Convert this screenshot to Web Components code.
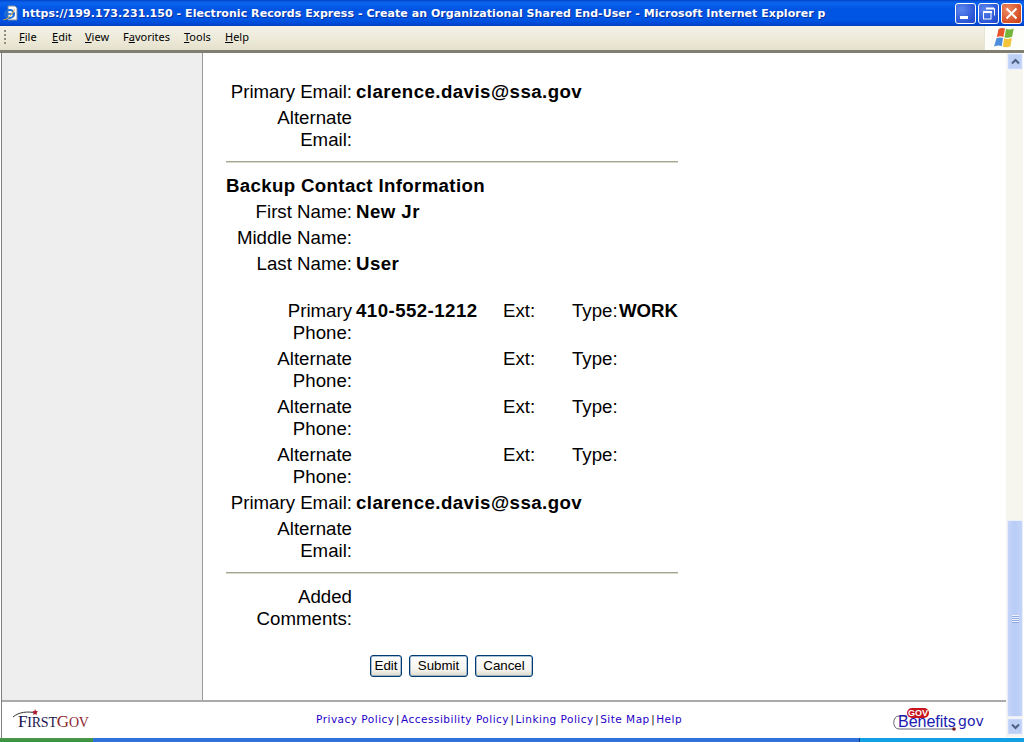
<!DOCTYPE html>
<html lang="en"><head><meta charset="utf-8"><title>Electronic Records Express</title>
<style>
html,body{margin:0;padding:0;height:100%;overflow:hidden;background:#fff}
</style></head><body>
<xp-window>
  <xp-titlebar slot="title">https://199.173.231.150 - Electronic Records Express - Create an Organizational Shared End-User - Microsoft Internet Explorer p</xp-titlebar>
  <xp-menubar slot="menu"></xp-menubar>
  <side-panel slot="side"></side-panel>
  <record-form slot="content">
    <form-row label="Primary Email:" value="clarence.davis@ssa.gov"></form-row>
    <form-row label="Alternate Email:"></form-row>
    <form-rule></form-rule>
    <form-heading>Backup Contact Information</form-heading>
    <form-row label="First Name:" value="New Jr"></form-row>
    <form-row label="Middle Name:"></form-row>
    <form-row label="Last Name:" value="User"></form-row>
    <phone-row style="margin-top:25px" label="Primary Phone:" value="410-552-1212" type="WORK"></phone-row>
    <phone-row label="Alternate Phone:"></phone-row>
    <phone-row label="Alternate Phone:"></phone-row>
    <phone-row label="Alternate Phone:"></phone-row>
    <form-row label="Primary Email:" value="clarence.davis@ssa.gov"></form-row>
    <form-row label="Alternate Email:"></form-row>
    <form-rule></form-rule>
    <form-row label="Added Comments:"></form-row>
    <button-row>
      <xp-button style="width:32px">Edit</xp-button>
      <xp-button style="width:59px">Submit</xp-button>
      <xp-button style="width:58px">Cancel</xp-button>
    </button-row>
  </record-form>
  <site-footer slot="footer"></site-footer>
  <xp-scrollbar slot="scroll"></xp-scrollbar>
</xp-window>
<script>
function def(name, css, html, init){
  customElements.define(name, class extends HTMLElement{
    connectedCallback(){
      if(this.shadowRoot) return;
      const r=this.attachShadow({mode:'open'});
      r.innerHTML='<style>'+css+'</style>'+(typeof html==='function'?html(this):html);
      if(init) init(this,r);
    }
  });
}
def('xp-window',`
:host{display:flex;flex-direction:column;width:1024px;height:742px;overflow:hidden;font-family:"Liberation Sans",Arial,sans-serif}
.body{display:flex;flex:1;min-height:0;background:#fff;padding-left:1px}
.frame{width:1px;background:#808080}
.left{flex:1;display:flex;flex-direction:column;min-width:0}
.main{display:flex;height:647px}
.task{height:4px;display:flex;flex:none}
.task i{display:block}
.g{width:93px;background:linear-gradient(#4c9a4c,#3a8f3e)}
.b{width:766px;background:#2f71d8;border-right:1px solid #123a88}
.c{flex:1;background:#12a0e4}
`,`
<slot name="title"></slot><slot name="menu"></slot>
<div class="body"><div class="frame"></div>
 <div class="left"><div class="main"><slot name="side"></slot><slot name="content"></slot></div><slot name="footer"></slot></div>
 <slot name="scroll"></slot></div>
<div class="task"><i class="g"></i><i class="b"></i><i class="c"></i></div>`);
def('xp-titlebar',`
:host{display:flex;align-items:center;flex:none;height:26px;box-sizing:border-box;padding:0 2px 0 3px;gap:3px;
background:linear-gradient(#0042c8 0,#0a5fe8 2px,#0a62ec 4px,#0054e3 9px,#0054e3 20px,#0048d4 24px,#003cba 26px);color:#fff}
.t{flex:1;font:bold 11px/26px "DejaVu Sans",Verdana,sans-serif;white-space:nowrap;overflow:hidden;text-shadow:1px 1px 0 #0a2e9c;letter-spacing:.05px;padding-top:1px;height:25px}
.btns{display:flex;gap:2px}
.b{width:21px;height:21px;box-sizing:border-box;border:1px solid #fff;border-radius:3px;background:radial-gradient(circle at 30% 30%,#5d86ee,#2a55d5 70%,#1f46c4);display:block}
.x{background:radial-gradient(circle at 30% 30%,#ec8a63,#d9532a 65%,#c23c14)}
svg{display:block}
`,`
<svg width="16" height="16" viewBox="0 0 16 16"><path d="M5 1h7l2 2v12H5z" fill="#fdfdfd" stroke="#7f88a0"/><path d="M7 5h5M9 8h3M9 11h3" stroke="#c4cbe0"/>
<ellipse cx="6.500" cy="9" rx="4.500" ry="4" fill="none" stroke="#1e6fd6" stroke-width="2"/><path d="M2 9h9" stroke="#1e6fd6" stroke-width="1.600"/><path d="M.500 14.500c2 1 8-3 11-10" fill="none" stroke="#f0b030" stroke-width="1"/></svg>
<div class="t"><slot></slot></div>
<div class="btns">
<span class="b"><svg width="19" height="19" viewBox="0 0 19 19"><rect x="4" y="12" width="8" height="3" fill="#fff"/></svg></span>
<span class="b"><svg width="19" height="19" viewBox="0 0 19 19"><path d="M7.500 4.500h8v7" fill="none" stroke="#fff"/><rect x="7" y="3.500" width="8" height="2" fill="#fff"/><rect x="4.500" y="8.500" width="7.500" height="6.500" fill="none" stroke="#fff"/><rect x="4" y="7" width="9" height="2" fill="#fff"/></svg></span>
<span class="b x"><svg width="19" height="19" viewBox="0 0 19 19"><path d="M4.500 4.500l10 10M14.500 4.500l-10 10" stroke="#fff" stroke-width="2"/></svg></span>
</div>`);
def('xp-menubar',`
:host{display:flex;flex:none;height:27px;box-sizing:border-box;background:#ece9d8;border-bottom:3px solid;border-image:linear-gradient(#a9a695 0,#7f7d70 100%) 1;font:11px "Noto Sans",Tahoma,sans-serif;color:#000}
.bar{flex:1;display:flex;align-items:center;background:linear-gradient(#f3f1e6,#ece9d8 60%,#e4e0cc);padding:0 0 3px 4px;box-sizing:border-box}
.grip{width:2px;height:16px;margin:3px 13px 0 0;background:repeating-linear-gradient(#8f8d80 0 2px,transparent 2px 4px)}
.m{white-space:nowrap;flex:none}
u{text-decoration:underline}
.flag{width:39px;background:#fdfdf9;display:flex;align-items:center;justify-content:center;border-left:1px solid #e8e5d6}
`,`
<div class="bar"><span class="grip"></span>
<span class="m" style="width:33px"><u>F</u>ile</span><span class="m" style="width:33px"><u>E</u>dit</span><span class="m" style="width:38px"><u>V</u>iew</span><span class="m" style="width:61px">F<u>a</u>vorites</span><span class="m" style="width:41px"><u>T</u>ools</span><span class="m"><u>H</u>elp</span></div>
<div class="flag"><svg width="24" height="22" viewBox="0 0 22 20">
<path d="M5 2c2-1.500 4-1.500 6-.6L9.500 9c-2-.8-4-.8-6 .3z" fill="#e9552a"/>
<path d="M12 1.600c2 1 4 1 7-.3L17.500 8.800c-3 1.200-5 1.200-7 .4z" fill="#74b53c"/>
<path d="M3.200 10.300c2-1 4-1 6-.2L8 17.500c-2-.8-4-.8-7 .4z" fill="#4b8fdc"/>
<path d="M10.300 10.300c2 .8 4 .8 7-.4L16 17.500c-3 1.300-5 1.300-7 .4z" fill="#f4c53a"/></svg></div>`);
def('side-panel',`:host{display:block;flex:none;width:200px;background:#eee;border-right:1px solid #999}`,'');
def('record-form',`:host{display:block;flex:none;width:452px;margin-left:23px;padding-top:28px;font:18.67px/22px "Liberation Sans",Arial,sans-serif;color:#000}`,'<slot></slot>');
const rowCss=`
.l{text-align:right}
.v{font-weight:bold;white-space:nowrap;font-size:18.67px;letter-spacing:.45px}
`;
def('form-row',`:host{display:grid;grid-template-columns:126px 1fr;column-gap:4px;margin-bottom:4px}`+rowCss,
 h=>`<div class="l">${h.getAttribute('label')}</div><div class="v">${h.getAttribute('value')||''}</div>`);
def('phone-row',`:host{display:grid;grid-template-columns:130px 147px 69px 47px auto;column-gap:0;margin-bottom:4px}`+rowCss+`.l{padding-right:4px}.w{letter-spacing:0}`,
 h=>`<div class="l">${h.getAttribute('label')}</div><div class="v">${h.getAttribute('value')||''}</div><div>Ext:</div><div>Type:</div><div class="v w">${h.getAttribute('type')||''}</div>`);
def('form-rule',`:host{display:block;height:1px;background:#a6a692;border-bottom:1px solid #d8d8cc;margin:10px 0 12px}`,'');
def('form-heading',`:host{display:block;font-weight:bold;font-size:18.67px;letter-spacing:.35px;margin-bottom:4px}`,'<slot></slot>');
def('button-row',`:host{display:flex;gap:7px;margin-left:144px;margin-top:25px}`,'<slot></slot>');
def('xp-button',`
:host{display:block;box-sizing:border-box;height:22px;border:1px solid #003c74;border-radius:3px;
background:linear-gradient(#fff,#f4f3ee 70%,#dcd8c8);box-shadow:inset 0 0 0 .5px #5a86b0;font:13.33px/20px "Liberation Sans",Arial,sans-serif;color:#000;text-align:center}`,'<slot></slot>');
def('site-footer',`
:host{display:flex;align-items:center;box-sizing:border-box;height:37px;border-top:2px solid #aaa;padding:0 21px 0 11px;background:#fff}
.fg{width:80px;flex:none;font:17px/20px "Liberation Serif",serif;color:#1a1650;white-space:nowrap;position:relative;letter-spacing:-.2px;padding-top:5px}
.fg b{font-weight:normal;color:#8e1f2e}.fg small{font-size:14px}
.fg svg{position:absolute;left:0;top:1px}
.links{flex:none;margin-left:223px;font:10.500px "DejaVu Sans",Verdana,sans-serif;color:#1f00c8;white-space:nowrap;letter-spacing:.5px;padding-bottom:2px}
.links s{text-decoration:none;color:#000;font-size:10px;letter-spacing:0;margin:0 1.500px}
.bg{position:relative;flex:none;margin-left:auto;width:92px;height:25px;color:#1a1ab0;white-space:nowrap}
.bg .pill{position:absolute;left:14px;top:1px;width:22px;height:10px;border-radius:6px;background:#c8141c;color:#fff;font:bold 9px/10px "Liberation Sans",sans-serif;text-align:center}
.bg svg{position:absolute;left:0;top:0}
.bg .tx{position:absolute;left:5px;top:2px;font:16px/25px "Liberation Sans",sans-serif}
.bg .gv{position:absolute;left:65px;top:2px;font:14px/25px "DejaVu Sans",sans-serif}
`,`
<div class="fg"><svg width="40" height="14" viewBox="0 0 40 14"><path d="M0 9C6 4 14 3 24 5" fill="none" stroke="#333" stroke-width="1"/><path d="M22 1l1 2 2 .3-1.500 1.500.4 2.200-1.900-1-1.900 1 .4-2.200L19.500 3.300 21.500 3z" fill="#b01c2e"/></svg><span style="margin-left:5px">F<small>IRST</small><b>G<small>OV</small></b></span></div>
<div class="links">Privacy Policy<s>|</s>Accessibility Policy<s>|</s>Linking Policy<s>|</s>Site Map<s>|</s>Help</div>
<div class="bg"><svg width="70" height="25" viewBox="0 0 70 25"><path d="M14 9H6C-1 9-1 22 6 22H61" fill="none" stroke="#667" stroke-width="1"/><circle cx="61" cy="22" r="1.800" fill="#7a1a1a"/></svg><span class="tx">Benefits</span><span class="gv">gov</span><span class="pill">GOV</span></div>`);
def('xp-scrollbar',`
:host{display:flex;flex-direction:column;flex:none;width:17px;height:684px;background:#f6f5ee;box-sizing:border-box;margin-right:1px}
.btn{flex:none;width:16px;height:17px;box-sizing:border-box;margin-left:1px;border:1px solid #eef3fe;border-radius:2px;background:#bfd0f6;box-shadow:inset 0 0 0 1px #c9d8f8;display:flex;align-items:center;justify-content:center}
.sp{height:450px;flex:none}
.th{flex:none;height:197px;width:16px;margin-left:1px;box-sizing:border-box;border:1px solid #e8eefc;border-radius:2px;background:linear-gradient(90deg,#c5d5fa,#b8ccf6 50%,#c4d4f8);display:flex;align-items:center;justify-content:center}
.grip{width:7px;height:8px;background:repeating-linear-gradient(#eef3fe 0 1px,#8fa8e0 1px 2px)}
`,`
<div class="btn"><svg width="9" height="7" viewBox="0 0 9 7"><path d="M1 5.500l3.500-3.500 3.500 3.500" fill="none" stroke="#4d6185" stroke-width="2"/></svg></div>
<div class="sp"></div>
<div class="th"><div class="grip"></div></div>
<div class="btn" style="margin-top:1px"><svg width="9" height="7" viewBox="0 0 9 7"><path d="M1 1.500l3.500 3.500 3.500-3.500" fill="none" stroke="#4d6185" stroke-width="2"/></svg></div>`);
</script>
</body></html>
